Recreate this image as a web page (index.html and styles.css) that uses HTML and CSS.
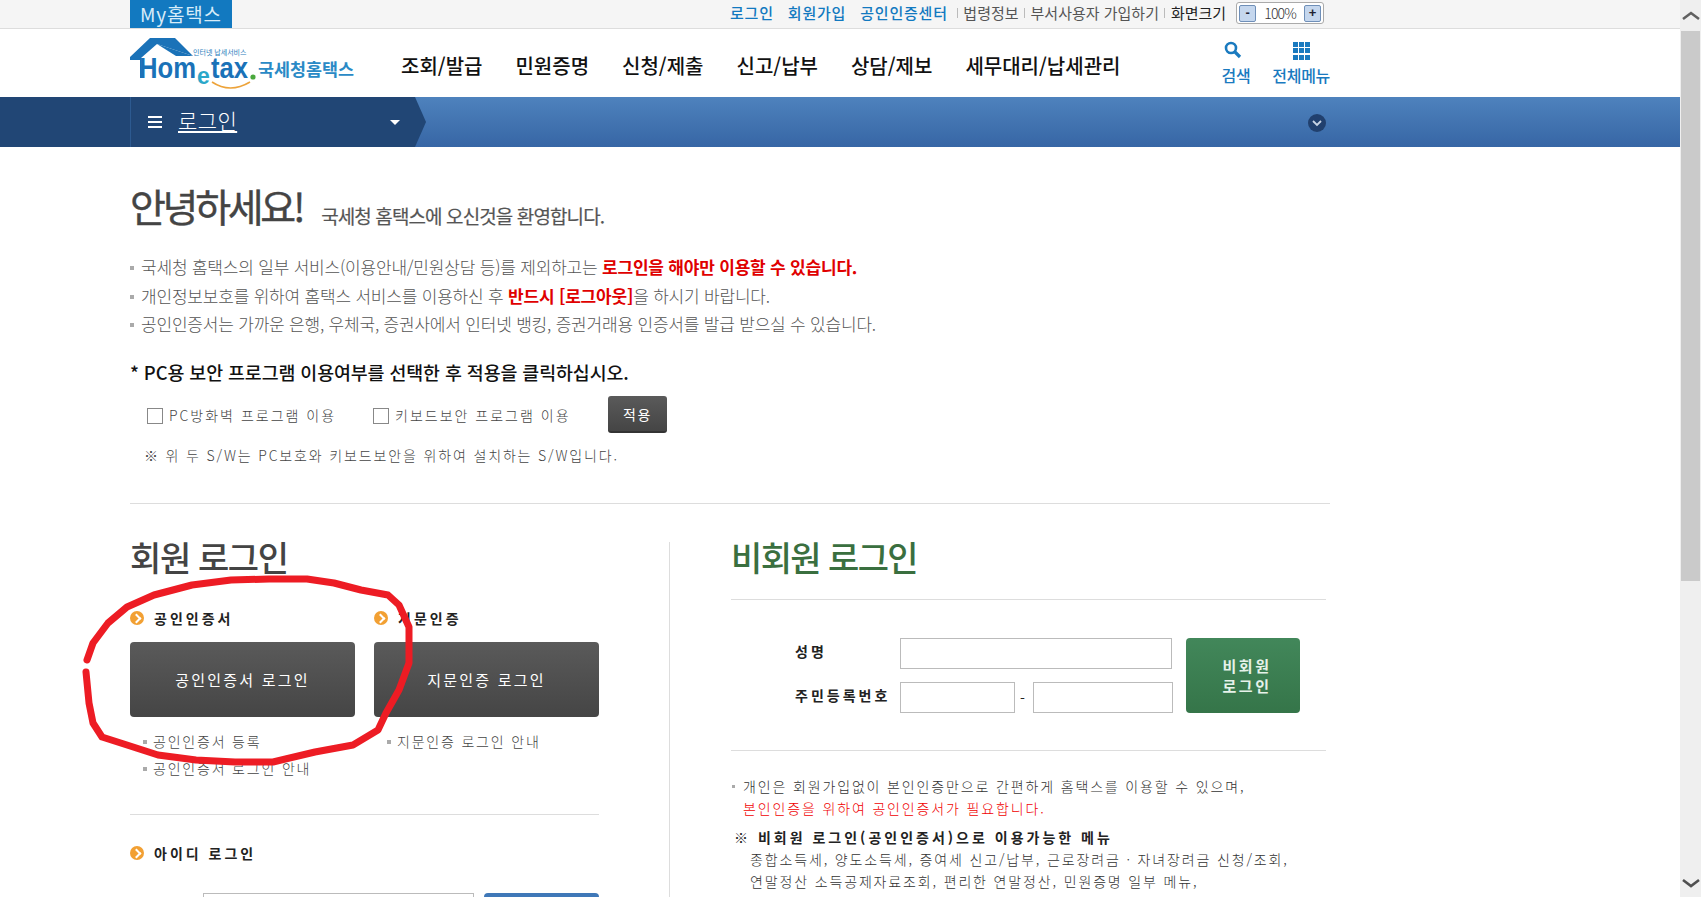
FILE: index.html
```html
<!DOCTYPE html>
<html lang="ko">
<head>
    <meta charset="UTF-8">
    <title>국세청 홈택스 - 로그인</title>
    <link rel="stylesheet" href="styles.css">
</head>
<body>
<div class="page">
    <!-- 상단 바 -->
    <div class="topbar">
        <a class="my-tab">My홈택스</a>
        <div class="toplinks">
            <a class="blue">로그인</a>
            <a class="blue">회원가입</a>
            <a class="blue">공인인증센터</a>
            <i class="sep"></i><a>법령정보</a>
            <i class="sep"></i><a>부서사용자 가입하기</a>
            <i class="sep"></i><a class="dark">화면크기</a>
            <div class="zoombox">
                <span class="zoombtn">-</span>
                <span class="zoomval">100%</span>
                <span class="zoombtn">+</span>
            </div>
        </div>
    </div>

    <!-- 로고, 메뉴 -->
    <div class="header">
        <svg class="logo" width="226" height="54" viewBox="0 0 226 54">
            <path d="M0 19 L20 0 L45 0 L63 18 L27 6 L11 20 L12 40 L10 40 L10 22 L0 22 Z" fill="#1a72b8"/>
            <path d="M27 6 L63 18 L46 18 Z" fill="#1a72b8"/>
            <text x="63" y="17" class="logo-small">인터넷 납세서비스</text>
            <text x="9" y="40" class="logo-home" textLength="57" lengthAdjust="spacingAndGlyphs">Hom</text>
            <text x="67" y="46" class="logo-e">e</text>
            <text x="81" y="40" class="logo-home" textLength="37" lengthAdjust="spacingAndGlyphs">tax</text>
            <circle cx="123" cy="39" r="2.6" fill="#4aa83c"/>
            <path d="M82 44 Q100 56 120 44" fill="none" stroke="#eda33a" stroke-width="1.6"/>
            <text x="128" y="38" class="logo-name" textLength="96" lengthAdjust="spacingAndGlyphs">국세청홈택스</text>
        </svg>
        <nav class="gnb">
            <a>조회/발급</a>
            <a>민원증명</a>
            <a>신청/제출</a>
            <a>신고/납부</a>
            <a>상담/제보</a>
            <a>세무대리/납세관리</a>
        </nav>
        <div class="util">
            <a class="util-item">
                <svg width="20" height="20" viewBox="0 0 20 20"><circle cx="8" cy="8" r="5" fill="none" stroke="#1a7abf" stroke-width="2.6"/><path d="M11.5 11.5 L17 17" stroke="#1a7abf" stroke-width="3.2"/></svg>
                검색
            </a>
            <a class="util-item">
                <span class="dots"><b></b><b></b><b></b><b></b><b></b><b></b><b></b><b></b><b></b></span>
                전체메뉴
            </a>
        </div>
    </div>

    <!-- 파란 메뉴 바 -->
    <div class="locbar">
        <div class="loc-left">
            <span class="burger"><b></b><b></b><b></b></span>
            <a class="loc-title">로그인</a>
            <i class="caret"></i>
        </div>
        <span class="loc-more">
            <svg width="10" height="8" viewBox="0 0 10 8"><path d="M1 2 L5 6 L9 2" fill="none" stroke="#c8d4e4" stroke-width="1.8"/></svg>
        </span>
    </div>

    <div class="wrap">
        <div class="greeting">
            <h1>안녕하세요!</h1>
            <p>국세청 홈택스에 오신것을 환영합니다.</p>
        </div>

        <ul class="notice">
            <li>국세청 홈택스의 일부 서비스(이용안내/민원상담 등)를 제외하고는 <strong>로그인을 해야만 이용할 수 있습니다.</strong></li>
            <li>개인정보보호를 위하여 홈택스 서비스를 이용하신 후 <strong>반드시 [로그아웃]</strong>을 하시기 바랍니다.</li>
            <li>공인인증서는 가까운 은행, 우체국, 증권사에서 인터넷 뱅킹, 증권거래용 인증서를 발급 받으실 수 있습니다.</li>
        </ul>

        <h3 class="pc-title">* PC용 보안 프로그램 이용여부를 선택한 후 적용을 클릭하십시오.</h3>
        <div class="pc-options">
            <label class="opt opt-first"><i class="check"></i>PC방화벽 프로그램 이용</label>
            <label class="opt opt-second"><i class="check"></i>키보드보안 프로그램 이용</label>
            <button class="btn-apply">적용</button>
        </div>
        <p class="pc-note">※ 위 두 S/W는 PC보호와 키보드보안을 위하여 설치하는 S/W입니다.</p>

        <div class="logins">
            <!-- 회원 로그인 -->
            <div class="member">
                <h2 class="title">회원 로그인</h2>
                <div class="cert-cols">
                    <div class="cert">
                        <h4 class="sub"><i class="go"></i>공인인증서</h4>
                        <button class="btn-dark">공인인증서 로그인</button>
                        <ul class="links">
                            <li>공인인증서 등록</li>
                            <li>공인인증서 로그인 안내</li>
                        </ul>
                    </div>
                    <div class="cert">
                        <h4 class="sub"><i class="go"></i>지문인증</h4>
                        <button class="btn-dark">지문인증 로그인</button>
                        <ul class="links">
                            <li>지문인증 로그인 안내</li>
                        </ul>
                    </div>
                </div>
                <div class="id-login">
                    <h4 class="sub"><i class="go"></i>아이디 로그인</h4>
                    <div class="id-row">
                        <input class="id-input" type="text">
                        <button class="btn-blue"></button>
                    </div>
                </div>
            </div>

            <!-- 비회원 로그인 -->
            <div class="guest">
                <h2 class="title green">비회원 로그인</h2>
                <div class="guest-form">
                    <div class="fields">
                        <div class="field">
                            <label>성명</label>
                            <input class="in-name" type="text">
                        </div>
                        <div class="field">
                            <label>주민등록번호</label>
                            <input class="in-front" type="text">
                            <span class="dash">-</span>
                            <input class="in-back" type="text">
                        </div>
                    </div>
                    <button class="btn-green">비회원<br>로그인</button>
                </div>
                <div class="guest-info">
                    <p class="dot-line">개인은 회원가입없이 본인인증만으로 간편하게 홈택스를 이용할 수 있으며,</p>
                    <p class="red-line">본인인증을 위하여 공인인증서가 필요합니다.</p>
                    <p class="menu-title">※ 비회원 로그인(공인인증서)으로 이용가능한 메뉴</p>
                    <p class="menu-line">종합소득세, 양도소득세, 증여세 신고/납부, 근로장려금 · 자녀장려금 신청/조회,</p>
                    <p class="menu-line">연말정산 소득공제자료조회, 편리한 연말정산, 민원증명 일부 메뉴,</p>
                </div>
            </div>
        </div>
    </div>

    <!-- 빨간 손글씨 동그라미 -->
    <svg class="scribble" width="1680" height="897" viewBox="0 0 1680 897">
        <path d="M87 660 L93 643 L108 623 L127 607 L154 595 L192 585 L231 580 L269 579 L307 579 L334 583 L361 590 L388 595 L399 605 L409 627 L409 663 L399 690 L386 713 L378 730 L353 745 L315 752 L273 762 L235 762 L196 760 L158 755 L127 745 L102 737 L93 723 L89 703 L86 672" fill="none" stroke="#ed1c24" stroke-width="7" stroke-linecap="round" stroke-linejoin="round"/>
    </svg>
</div>

<!-- 스크롤바 -->
<div class="scrollbar">
    <svg class="arrow" width="18" height="10" viewBox="0 0 18 10"><path d="M1 8 L9 2 L17 8" fill="none" stroke="#606060" stroke-width="2.6"/></svg>
    <div class="thumb"></div>
    <svg class="arrow arrow-down" width="18" height="10" viewBox="0 0 18 10"><path d="M1 2 L9 8 L17 2" fill="none" stroke="#505050" stroke-width="2.6"/></svg>
</div>
</body>
</html>
```

FILE: styles.css
```css
* {
    box-sizing: border-box;
}
html, body {
    margin: 0;
    height: 100%;
    overflow: hidden;
}
body {
    display: flex;
    height: 897px;
    background: #fff;
    color: #444;
    font-family: "Noto Sans CJK KR", "Noto Sans", sans-serif;
    font-size: 14px;
}
h1, h2, h3, h4, p, ul {
    margin: 0;
    padding: 0;
}
ul {
    list-style: none;
}
button {
    border: none;
    font-family: inherit;
    padding: 0;
}
.page {
    position: relative;
    width: 1680px;
    height: 897px;
    overflow: hidden;
}

/* 상단 바 */
.topbar {
    display: flex;
    height: 29px;
    padding-left: 130px;
    background: #f5f5f5;
    border-bottom: 1px solid #ddd;
}
.my-tab {
    width: 102px;
    height: 28px;
    background: #1279c0;
    color: #d8ecf8;
    font-size: 19px;
    line-height: 27.5px;
    letter-spacing: .8px;
    text-align: center;
}
.toplinks {
    display: flex;
    align-items: center;
    height: 26px;
    margin-left: 498px;
    font-size: 15px;
    line-height: 24px;
    color: #555;
}
.toplinks a {
    white-space: nowrap;
}
.toplinks .blue {
    color: #1279c0;
    font-weight: 500;
    margin-right: 14px;
    letter-spacing: .8px;
}
.toplinks .dark {
    color: #222;
}
.sep {
    width: 1px;
    height: 10px;
    background: #bbb;
    margin: 0 5.5px;
}
.toplinks .blue + .sep {
    margin-left: -5px;
}
.zoombox {
    display: flex;
    align-items: center;
    justify-content: space-between;
    width: 88px;
    height: 22px;
    margin-left: 10px;
    padding: 0 2px;
    background: #fff;
    border: 1px solid #aaa;
    border-radius: 3px;
}
.zoombtn {
    width: 17px;
    height: 17px;
    background: #c5d7ee;
    border: 1px solid #6f8fb8;
    border-radius: 2px;
    color: #223;
    font-family: "Liberation Sans", sans-serif;
    font-size: 13px;
    font-weight: bold;
    line-height: 14px;
    text-align: center;
}
.zoomval {
    font-size: 14px;
    font-weight: 300;
    letter-spacing: -.8px;
    color: #333;
}

/* 헤더 */
.header {
    display: flex;
    height: 68px;
    padding-left: 130px;
    width: 1330px;
}
.logo {
    margin-top: 9px;
    flex: none;
}
.logo-small {
    font-size: 7px;
    fill: #2a7cbc;
}
.logo-home {
    font-family: "Liberation Sans", sans-serif;
    font-size: 29px;
    font-weight: bold;
    fill: #1a72b8;
}
.logo-e {
    font-family: "Liberation Sans", sans-serif;
    font-size: 23px;
    font-weight: bold;
    fill: #2aa7c9;
}
.logo-name {
    font-size: 17px;
    font-weight: 700;
    fill: #2a8ac6;
}
.gnb {
    display: flex;
    gap: 33px;
    margin-left: 45px;
    padding-top: 3px;
    font-size: 20px;
    font-weight: 500;
    line-height: 68px;
    color: #111;
    white-space: nowrap;
    letter-spacing: 0;
}
.util {
    display: flex;
    gap: 22px;
    margin-left: auto;
}
.util-item {
    display: flex;
    flex-direction: column;
    align-items: center;
    height: 62px;
    padding-top: 11px;
    color: #1a7abf;
    font-size: 16px;
    font-weight: 500;
    line-height: 30px;
    letter-spacing: -.3px;
    white-space: nowrap;
}
.util-item svg {
    margin-left: -5px;
    height: 20px;
}
.dots {
    display: grid;
    grid-template-columns: repeat(3, 5px);
    gap: 1px;
    margin-left: 1px;
    padding-top: 2px;
    height: 20px;
}
.dots b {
    width: 5px;
    height: 5px;
    background: #1a7abf;
}

/* 파란 바 */
.locbar {
    position: relative;
    display: flex;
    height: 50px;
    background: linear-gradient(#4e82bd, #3766a5);
}
.loc-left {
    position: relative;
    display: flex;
    align-items: center;
    width: 415px;
    padding-left: 148px;
    background: #214675;
}
.loc-left::before {
    content: "";
    position: absolute;
    left: 130px;
    top: 0;
    bottom: 0;
    width: 1px;
    background: #2d5a90;
}
.loc-left::after {
    content: "";
    position: absolute;
    left: 415px;
    top: 0;
    border-left: 11px solid #214675;
    border-top: 25px solid transparent;
    border-bottom: 25px solid transparent;
}
.burger {
    display: flex;
    flex-direction: column;
    gap: 3px;
    width: 14px;
}
.burger b {
    height: 2px;
    background: #fff;
}
.loc-title {
    margin-left: 16px;
    margin-bottom: 4px;
    color: #fff;
    font-size: 21px;
    font-weight: 300;
    line-height: 28px;
    text-decoration: underline;
    text-underline-offset: 2px;
    letter-spacing: .4px;
}
.caret {
    margin-left: 153px;
    border-top: 5px solid #fff;
    border-left: 5px solid transparent;
    border-right: 5px solid transparent;
}
.loc-more {
    position: absolute;
    left: 1308px;
    top: 17px;
    display: flex;
    align-items: center;
    justify-content: center;
    width: 18px;
    height: 18px;
    border-radius: 50%;
    background: #21406e;
}

/* 본문 */
.wrap {
    width: 1200px;
    margin-left: 130px;
}
.greeting {
    display: flex;
    align-items: flex-start;
    height: 52px;
    margin-top: 32px;
}
.greeting h1 {
    font-size: 39px;
    font-weight: 400;
    line-height: 52px;
    letter-spacing: -3.3px;
    color: #444;
    -webkit-text-stroke: .4px #444;
}
.greeting p {
    margin: 23px 0 0 19px;
    font-size: 19px;
    line-height: 28px;
    letter-spacing: -.9px;
    color: #555;
    -webkit-text-stroke: .2px #555;
}
.notice {
    margin-top: 22px;
    color: #555;
    font-size: 17px;
    line-height: 28.5px;
}
.notice li {
    position: relative;
    padding-left: 11px;
    font-weight: 300;
    letter-spacing: -.2px;
}
.notice li::before {
    content: "";
    position: absolute;
    left: 0;
    top: 13px;
    width: 4px;
    height: 4px;
    background: #aaa;
}
.notice strong {
    color: #e00000;
    font-weight: 700;
}
.pc-title {
    margin-top: 19.5px;
    font-size: 18.4px;
    font-weight: 500;
    line-height: 28px;
    color: #111;
    letter-spacing: -.1px;
}
.pc-options {
    display: flex;
    align-items: center;
    height: 37px;
    margin-top: 10px;
    padding-left: 17px;
    color: #444;
    font-weight: 300;
    letter-spacing: 2px;
}
.opt {
    display: flex;
    align-items: center;
}
.opt-first {
    width: 226px;
}
.opt-second {
    width: 235px;
}
.check {
    width: 16px;
    height: 16px;
    margin-right: 6px;
    margin-top: 3px;
    background: #fff;
    border: 1px solid #888;
}
.btn-apply {
    width: 59px;
    height: 37px;
    background: linear-gradient(#5a5a5a, #454545);
    border-bottom: 2px solid #333;
    border-radius: 3px;
    color: #fff;
    font-size: 14px;
    letter-spacing: 1.5px;
}
.pc-note {
    margin-top: 12px;
    padding-left: 14px;
    font-weight: 300;
    line-height: 20px;
    letter-spacing: 1.85px;
}
.logins {
    display: flex;
    margin-top: 38px;
    height: 402px;
    border-top: 1px solid #ddd;
    padding-top: 38px;
}
.member {
    width: 469px;
    margin-right: 70px;
}
.guest {
    width: 595px;
    margin-left: 62px;
    position: relative;
}
.guest::before {
    content: "";
    position: absolute;
    left: -62px;
    top: 0;
    bottom: 0;
    width: 1px;
    background: #ddd;
}
.title {
    height: 34px;
    font-size: 34px;
    font-weight: 500;
    line-height: 30px;
    letter-spacing: -1.4px;
    color: #444;
}
.title.green {
    color: #3a6f3f;
    letter-spacing: -1.6px;
}
.cert-cols {
    display: flex;
    gap: 19px;
    height: 239px;
    padding-top: 32px;
    border-bottom: 1px solid #ddd;
}
.cert {
    width: 225px;
}
.sub {
    display: flex;
    align-items: center;
    height: 20px;
    font-size: 14px;
    font-weight: 700;
    line-height: 20px;
    color: #222;
    letter-spacing: 3px;
    white-space: nowrap;
}
.go {
    position: relative;
    flex: none;
    width: 14px;
    height: 14px;
    margin-right: 10px;
    border-radius: 50%;
    background: #f2a033;
}
.go::after {
    content: "";
    position: absolute;
    left: 3px;
    top: 4px;
    width: 5px;
    height: 5px;
    border-top: 2px solid #fff;
    border-right: 2px solid #fff;
    transform: rotate(45deg);
}
.btn-dark {
    display: block;
    width: 225px;
    height: 75px;
    margin-top: 14px;
    background: linear-gradient(#5a5a5a, #454545);
    border-radius: 4px;
    color: #fff;
    font-size: 15px;
    letter-spacing: 2.2px;
}
.links {
    margin-top: 11px;
    padding-left: 13px;
    font-weight: 300;
    line-height: 27px;
    letter-spacing: 1.8px;
    color: #444;
}
.links li {
    position: relative;
    padding-left: 10px;
}
.links li::before {
    content: "";
    position: absolute;
    left: 0;
    top: 12px;
    width: 4px;
    height: 4px;
    background: #aaa;
}
.id-login {
    padding-top: 28px;
}
.id-row {
    display: flex;
    margin-top: 30px;
    padding-left: 73px;
}
.id-input {
    width: 271px;
    height: 32px;
    border: 1px solid #bbb;
}
.btn-blue {
    width: 115px;
    height: 60px;
    margin-left: 10px;
    background: #3f78b8;
    border-radius: 4px;
}
.guest-form {
    display: flex;
    height: 152px;
    margin-top: 23px;
    padding: 38px 0 0 64px;
    border-top: 1px solid #ddd;
    border-bottom: 1px solid #ddd;
}
.field {
    display: flex;
    align-items: center;
    height: 31px;
    margin-bottom: 13px;
    font-weight: 700;
    color: #222;
    letter-spacing: 3px;
}
.field label {
    width: 105px;
    padding-bottom: 6px;
    white-space: nowrap;
}
.field input {
    height: 31px;
    border: 1px solid #bbb;
}
.in-name {
    width: 272px;
}
.in-front {
    width: 115px;
}
.in-back {
    width: 140px;
}
.dash {
    width: 18px;
    font-weight: 400;
    text-align: center;
}
.btn-green {
    width: 114px;
    height: 75px;
    margin-left: 13px;
    padding-left: 8px;
    background: linear-gradient(#42875a, #357549);
    border-radius: 4px;
    color: #e6f2ea;
    font-size: 15px;
    font-weight: 700;
    line-height: 20px;
    letter-spacing: 2.5px;
}
.guest-info {
    padding-top: 24px;
    font-size: 14px;
    line-height: 22px;
    font-weight: 300;
    letter-spacing: 1.85px;
    color: #333;
}
.dot-line {
    position: relative;
    padding-left: 12px;
}
.dot-line::before {
    content: "";
    position: absolute;
    left: 1px;
    top: 10px;
    width: 3px;
    height: 3px;
    background: #aaa;
}
.red-line {
    padding-left: 12px;
    color: #f00000;
}
.menu-title {
    margin-top: 7px;
    padding-left: 3px;
    font-weight: 700;
    letter-spacing: 3px;
    color: #222;
}
.menu-line {
    padding-left: 19px;
    white-space: nowrap;
}

/* 빨간 동그라미 */
.scribble {
    position: absolute;
    left: 0;
    top: 0;
    pointer-events: none;
}

/* 스크롤바 */
.scrollbar {
    display: flex;
    flex-direction: column;
    align-items: center;
    flex: none;
    width: 21px;
    height: 897px;
    background: #efefef;
}
.arrow {
    flex: none;
    margin-top: 11px;
    height: 10px;
}
.thumb {
    width: 19px;
    height: 550px;
    margin-top: 10px;
    background: #cacaca;
}
.arrow-down {
    margin-top: auto;
    margin-bottom: 9px;
}
```
